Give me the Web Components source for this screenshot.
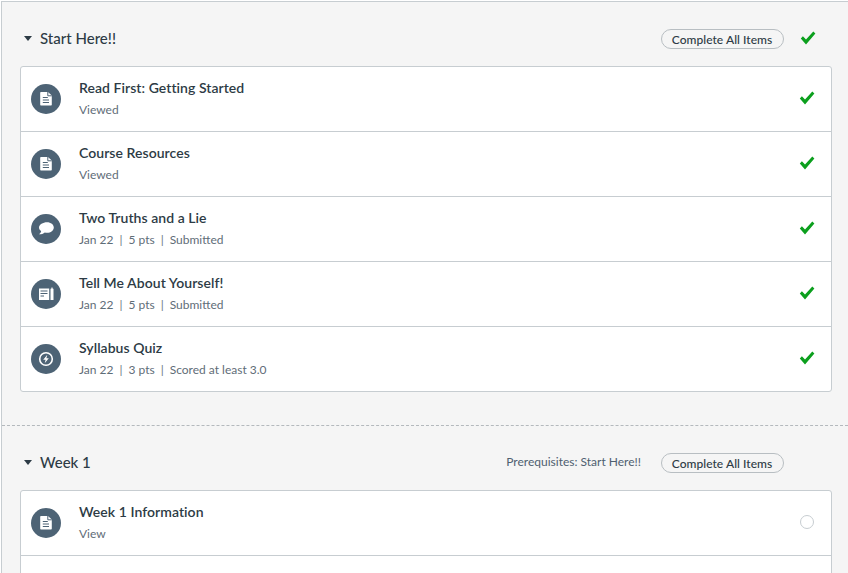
<!DOCTYPE html>
<html><head><meta charset="utf-8"><title>Modules</title>
<style>
html,body{margin:0;padding:0;background:#fff;height:100%;overflow:hidden}
body{font-family:Lato,"Open Sans",sans-serif;color:#2d3b45}
</style></head><body>
<module-list>
<course-module name="Start Here!!" done>
<module-item icon="page" title="Read First: Getting Started" meta="Viewed" done></module-item>
<module-item icon="page" title="Course Resources" meta="Viewed" done></module-item>
<module-item icon="chat" title="Two Truths and a Lie" meta="Jan 22|5 pts|Submitted" done></module-item>
<module-item icon="assign" title="Tell Me About Yourself!" meta="Jan 22|5 pts|Submitted" done></module-item>
<module-item icon="quiz" title="Syllabus Quiz" meta="Jan 22|3 pts|Scored at least 3.0" done></module-item>
</course-module>
<course-module name="Week 1" prereq="Prerequisites: Start Here!!">
<module-item icon="page" title="Week 1 Information" meta="View"></module-item>
<module-item icon="page" title="" meta="" blank></module-item>
</course-module>
</module-list>
<script>
const CHECK='<svg width="16" height="14" viewBox="0 0 16 14"><path d="M.8 7.400l2.100-2.100 3.100 3.100L13.300.4l2.100 2.100L6 13.400z" fill="#0b9f1d"/></svg>';
const ICONS={
page:'<path d="M-5-7h7L5.800-3.500V5.800a.8.8 0 0 1-.8.8H-5a.8.8 0 0 1-.8-.8V-6.200A.8.8 0 0 1-5-7z" fill="#fff"/><path d="M1.800-7v3.800h4" fill="none" stroke="#4d6375"/><path d="M-3.200-1.500h5M-3.200 1h6.200M-3.200 3.500h6.200" stroke="#4d6375" stroke-width="1"/>',
chat:'<path d="M1-6.800c3.900 0 6.800 2.300 6.800 5.200S4.900 3.800 1 3.800c-.7 0-1.500-.1-2.200-.3C-2.500 4.900-4.600 5.300-7 5.300c1.300-.9 2-2 2.100-3.300C-6.300 1-7-.2-7-1.600-7-4.500-3-6.800 1-6.800z" fill="#fff"/>',
assign:'<path d="M-7-5.500H3.200V6H-7z" fill="#fff"/><path d="M-5.500-3H1.500M-5.500-.5H1.500M-5.500 2H-2" stroke="#4d6375" stroke-width="1.100"/><path d="M4.500-5h3V6h-3zM6-6.800l1.500 1.600h-3z" fill="#fff"/>',
quiz:'<circle r="6.300" fill="none" stroke="#fff" stroke-width="1.600"/><path d="M1.300-4.300L-2.800.7H-.4L-1.300 4.300 2.800-.7H.4z" fill="#fff"/>'
};
class ModuleList extends HTMLElement{constructor(){super();this.attachShadow({mode:'open'}).innerHTML=`<style>:host{display:block;margin:1px 0 0 1px;border-top:1px solid #c7cdd1;border-left:1px solid #c7cdd1;background:#f5f5f5;height:572px;overflow:hidden}</style><slot></slot>`}}
class CourseModule extends HTMLElement{constructor(){super();
const r=this.attachShadow({mode:'open'});
r.innerHTML=`<style>
:host{display:block;padding:0 16px 33px 18px;border-bottom:1px dashed #b4b9bd}
:host(:last-child){border-bottom:0}
header{height:64px;display:flex;align-items:center;padding-top:7px;box-sizing:border-box}
.tri{width:0;height:0;border:4px solid transparent;border-top:5px solid #2d3b45;border-bottom:0;margin:2px 8px 0 4px}
h2{margin:0;font:500 15px Lato,sans-serif;color:#2d3b45;flex:1}
.pre{font-size:12px;color:#4f6070;margin-right:20px}
button{all:unset;box-sizing:border-box;height:20px;width:123px;margin-top:3px;padding:1px 1px 0 0;text-align:center;font:500 12px/18px Lato,sans-serif;letter-spacing:.04px;color:#2d3b45;border:1px solid #b8bec2;border-radius:10px;background:#f5f5f5}
.end{width:48px;display:flex;justify-content:flex-start;padding-left:16px;box-sizing:border-box;margin-top:1px}
.list{background:#fff;border:1px solid #c7cdd1;border-radius:3px}
</style><header><span class="tri"></span><h2></h2><span class="pre"></span><button>Complete All Items</button><span class="end"></span></header><div class="list"><slot></slot></div>`;
}
connectedCallback(){const r=this.shadowRoot;r.querySelector('h2').textContent=this.getAttribute('name');
const p=r.querySelector('.pre');if(this.hasAttribute('prereq'))p.textContent=this.getAttribute('prereq');else p.remove();
if(this.hasAttribute('done'))r.querySelector('.end').innerHTML=CHECK;}}
class ModuleItem extends HTMLElement{constructor(){super();
this.attachShadow({mode:'open'}).innerHTML=`<style>
:host{display:flex;box-sizing:border-box;height:65px;align-items:center;border-bottom:1px solid #c7cdd1;padding-left:10px;padding-right:16px}
:host(:last-child){border-bottom:0;height:64px}
.ic{width:30px;height:30px;flex:none;margin-right:18px}
.txt{flex:1;min-width:0;padding-bottom:2px}
.t{font:600 14px/20px Lato,sans-serif;letter-spacing:.05px;color:#2d3b45;height:20px}
.m{font:400 12px/16px Lato,sans-serif;color:#5f6d78;margin-top:4px;height:16px;display:flex}
.m i{font-style:normal;margin:0 6px;color:#6a7883}
.st{width:16px;height:14px;display:flex;align-items:center;justify-content:center;margin-top:-2px}
.ring{width:14px;height:14px;box-sizing:border-box;border:1.500px solid #c7cdd1;border-radius:50%;background:#fff}
</style><svg class="ic" viewBox="-15 -15 30 30"><circle r="15" fill="#4d6375"/><g class="g"></g></svg><div class="txt"><div class="t"></div><div class="m"></div></div><div class="st"></div>`}
connectedCallback(){const r=this.shadowRoot;
r.querySelector('.g').innerHTML=ICONS[this.getAttribute('icon')];
r.querySelector('.t').textContent=this.getAttribute('title');
const parts=(this.getAttribute('meta')||'').split('|');
r.querySelector('.m').innerHTML=parts.map(s=>`<span>${s}</span>`).join('<i>|</i>');
r.querySelector('.st').innerHTML=this.hasAttribute('done')?CHECK:'<span class="ring"></span>';}}
customElements.define('module-list',ModuleList);customElements.define('course-module',CourseModule);customElements.define('module-item',ModuleItem);
</script></body></html>
